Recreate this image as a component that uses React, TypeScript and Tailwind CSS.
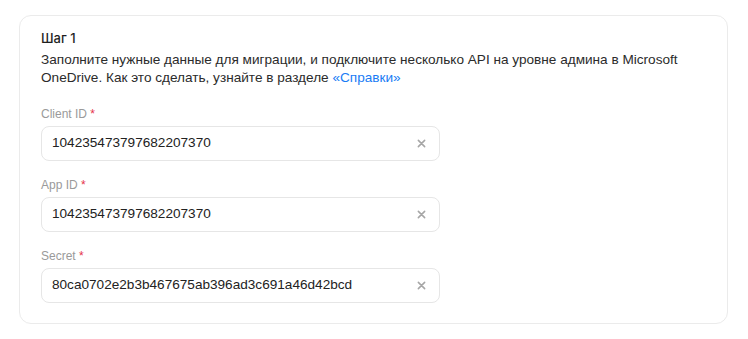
const fields = [
  { label: "Client ID", value: "104235473797682207370" },
  { label: "App ID", value: "104235473797682207370" },
  { label: "Secret", value: "80ca0702e2b3b467675ab396ad3c691a46d42bcd" },
]

function Field({ label, value }: { label: string; value: string }) {
  return (
    <div className="flex flex-col gap-1">
      <label className="text-[12px] leading-4 text-[#9a9a9a]">
        {label} <span className="text-[#e5334b]">*</span>
      </label>
      <div className="flex h-[35px] w-[399px] items-center justify-between rounded-[8px] border border-[#e6e6e6] bg-white pl-[10px] pr-[13px]">
        <span className="text-[13.6px] text-[#222222]">{value}</span>
        <svg width="9" height="9" viewBox="0 0 10 10" className="text-[#a6a6a6]">
          <path d="M1.5 1.5l7 7M8.5 1.5l-7 7" stroke="currentColor" strokeWidth="1.7" strokeLinecap="round" />
        </svg>
      </div>
    </div>
  )
}

export default function App() {
  return (
    <div
      className="min-h-[339px] w-[748px] bg-white pl-[19px] pt-[15px]"
      style={{ fontFamily: '"Liberation Sans", Arial, sans-serif' }}
    >
      <div className="flex w-[709px] flex-col rounded-[12px] border border-[#ebebeb] px-[21px] pb-[20px] pt-[13px]">
        <h2 className="text-[13px] font-medium leading-[18px] text-[#1f1f1f]" style={{ fontFamily: "Inter, sans-serif" }}>
          Шаг 1
        </h2>
        <p className="mt-1 text-[13.6px] leading-[18px] text-[#2b2b2b]">
          Заполните нужные данные для миграции, и подключите несколько API на уровне админа в Microsoft
          OneDrive. Как это сделать, узнайте в разделе <span className="text-[#1a7cf5]">«Справки»</span>
        </p>
        <div className="mt-[19px] flex flex-col gap-4">
          {fields.map((f) => (
            <Field key={f.label} label={f.label} value={f.value} />
          ))}
        </div>
      </div>
    </div>
  )
}
